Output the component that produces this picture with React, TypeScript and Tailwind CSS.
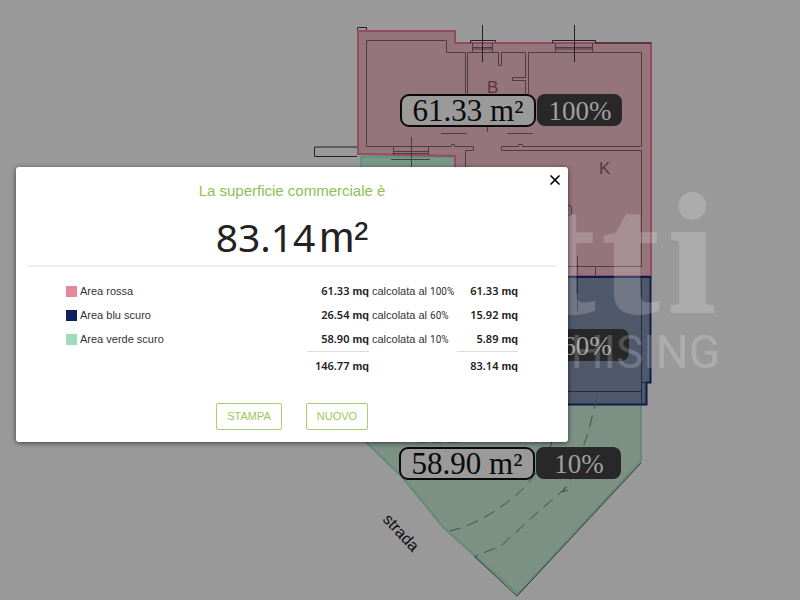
import { X } from 'lucide-react';

const areas = [
  { name: 'Area rossa', swatch: 'bg-[#e8879b]', size: '61.33', percent: '100%', result: '61.33' },
  { name: 'Area blu scuro', swatch: 'bg-[#0f1f60]', size: '26.54', percent: '60%', result: '15.92' },
  { name: 'Area verde scuro', swatch: 'bg-[#9edcba]', size: '58.90', percent: '10%', result: '5.89' },
];

function Amount({ value }: { value: string }) {
  return (
    <span className="font-bold text-[#222]">
      <span className="font-['Noto_Sans'] text-[11px] font-semibold">{value}</span> mq
    </span>
  );
}

function AreaTag({ x, y, size, percent }: { x: number; y: number; size?: string; percent: string }) {
  return (
    <g className="font-['Liberation_Serif',serif]">
      {size && (
        <>
          <rect x={x} y={y} width="134" height="31" rx="8" fill="#9a9a9a" stroke="#0a0a0a" strokeWidth="2" />
          <text x={x + 67} y={y + 26} textAnchor="middle" className="text-[31px]" fill="#0a0a0a">
            {size}
          </text>
        </>
      )}
      <rect x={x + 136} y={y - 1} width="85" height="32" rx="8" fill="#282828" />
      <text x={x + 179} y={y + 25} textAnchor="middle" className="text-[27px]" fill="#a0a0a0">
        {percent}
      </text>
    </g>
  );
}

function FloorPlan() {
  return (
    <svg className="absolute top-0 left-0 h-[600px] w-[800px]" viewBox="0 0 800 600" fill="none" aria-hidden="true">
      {/* stub wall and chimney */}
      <path d="M357 147H314.500V156.500H357M357.500 31V27.500H366.500V30" stroke="#222" />

      {/* green: upper strip and garden */}
      <path d="M361 157H455V180H361Z" fill="#7a9888" stroke="#5d977c" strokeWidth="2" />
      <path
        d="M350 426L367 443L403 478L443 527L475 556L518 594L641 461V404H400Z"
        fill="#7d9084"
        stroke="#648b78"
        strokeWidth="2"
      />
      <path d="M475 557L517 596L641 463" stroke="#353b37" />

      {/* red */}
      <path d="M358 31H455V43H651V276H455V156L358 154Z" fill="#94757b" stroke="#97495d" strokeWidth="2" />

      {/* dark blue */}
      <path d="M455 277H650.500V382.500H646.500V404.500H455Z" fill="#50586b" stroke="#0d1c49" strokeWidth="2" />
      <path d="M641.500 277V404M455 391.500H641M641 382.500H647M577.500 277V294M577.500 297V311" stroke="#222a42" />

      {/* walls */}
      <g stroke="#523a41">
        <path d="M465.500 94V52.500H446.500V40.500H366.500V146.500H451.500V144.500H454.500V146.500H473.500V150.500H465.500V170" />
        <path d="M467.500 94V52.500H498.500V65.500H501.500V52.500H525.500V77.500H512.500V80.500H525.500V94" />
        <path d="M528.500 94V52.500H641.500V146.500H522.500V144.500H518.500V146.500H501.500V150.500H641.500V266.500H560" />
        <path d="M441 133.500H467M507 133.500H533M487.500 126V132M577.500 256V276M595.500 266V276" />
        <path d="M472.500 43V52M492.500 43V52M555.500 43V52M592.500 43V52M393.500 147V155M428.500 147V155" />
        <path d="M472 47.500H492M472 49H492M555 47.500H592M555 49H592M393 151.500H428M393 153.500H428" />
        <path d="M411.500 137V167M391 159.500H430" />
        <path d="M567 205.500H570L571.500 207V214L570 215.500H567" />
      </g>
      <g stroke="#222">
        <path d="M482.500 25V62M574.500 25V62" />
        <path d="M470.500 43V40.500H495.500V42M552.500 43V40.500H595.500V43H651" />
      </g>

      {/* footpath across the garden */}
      <g stroke="#42514a">
        <path d="M597 397C592 415 590 430 583 447L568 486L538 512L501 546L478 555" strokeDasharray="12 7" />
        <path d="M553 439C545 465 525 492 499 508C482 520 466 527 450 531" strokeDasharray="12 7" />
        <path d="M562 492L568 490M563 492L565 487M478 555L474 557" />
      </g>
      <path d="M417 442H427M432 442H442M447 442H459" stroke="#485a51" />

      <g className="font-['Liberation_Sans',sans-serif] text-[17px]" fill="#5c323e">
        <text x="487" y="93">B</text>
        <text x="599" y="174">K</text>
      </g>
      <text
        x="382"
        y="520"
        transform="rotate(47 382 520)"
        className="font-['Liberation_Sans',sans-serif] text-[16px]"
        fill="#0a0a0a"
      >
        strada
      </text>

      <AreaTag x={401} y={95} size="61.33 m²" percent="100%" />
      <AreaTag x={408} y={330} percent="60%" />
      <AreaTag x={400} y={448} size="58.90 m²" percent="10%" />

      {/* agency watermark */}
      <g fill="#fff" stroke="#fff" opacity="0.19">
        <g className="font-['Liberation_Serif',serif] text-[171px] font-bold" strokeWidth="2">
          <text x="538" y="312">t</text>
          <text x="602" y="312">t</text>
          <text x="668" y="312">i</text>
        </g>
        <text x="720" y="368" textAnchor="end" className="font-['Roboto',sans-serif] text-[46px]" stroke="none">
          HISING
        </text>
      </g>
    </svg>
  );
}

export default function App() {
  return (
    <main className="relative min-h-screen overflow-hidden bg-[#999] pt-[167px] pr-4 pl-4 font-['Liberation_Sans',Arial,sans-serif]">
      <FloorPlan />

      <section
        role="dialog"
        aria-labelledby="dialog-title"
        className="relative w-full max-w-[552px] rounded-[3px] bg-white px-3 pt-4 pb-3 shadow-[0_1px_5px_rgba(0,0,0,0.6)]"
      >
        <button type="button" aria-label="Chiudi" className="absolute top-1 right-1 p-px text-black">
          <X size={16} strokeWidth={2.5} />
        </button>

        <h1 id="dialog-title" className="text-center text-[15px] leading-4 text-[#8cc152]">
          La superficie commerciale è
        </h1>
        <p className="mt-3 flex h-[54px] items-baseline justify-center gap-1 text-[42px] leading-[52px] text-[#222]">
          <span className="font-['Noto_Sans',sans-serif] text-[39px]">83.14</span>
          <span>m²</span>
        </p>
        <hr className="border-t-2 border-[#eee]" />

        <table className="mt-3 ml-[38px] w-[452px] table-fixed text-[11px] leading-4 text-[#333]">
          <colgroup>
            <col />
            <col className="w-[62px]" />
            <col className="w-[88px]" />
            <col className="w-[61px]" />
          </colgroup>
          <tbody>
            {areas.map((area) => (
              <tr key={area.name} className="h-6">
                <td>
                  <span className="flex items-center gap-[3px]">
                    <span className={`size-[11px] ${area.swatch}`} />
                    {area.name}
                  </span>
                </td>
                <td className="text-right">
                  <Amount value={area.size} />
                </td>
                <td className="pl-[3px] whitespace-nowrap">
                  calcolata al <span className="font-['Roboto'] text-[10px]">{area.percent}</span>
                </td>
                <td className="text-right">
                  <Amount value={area.result} />
                </td>
              </tr>
            ))}
          </tbody>
          <tfoot>
            <tr className="h-[30px]">
              <td />
              <td className="border-t border-[#ddd] text-right">
                <Amount value="146.77" />
              </td>
              <td />
              <td className="border-t border-[#ddd] text-right">
                <Amount value="83.14" />
              </td>
            </tr>
          </tfoot>
        </table>

        <div className="mt-[22px] flex justify-center gap-6 text-[11px] text-[#9bc95b]">
          <button type="button" className="h-[27px] w-[66px] rounded-[2px] border border-[#a8d070]">
            STAMPA
          </button>
          <button type="button" className="h-[27px] w-[62px] rounded-[2px] border border-[#a8d070]">
            NUOVO
          </button>
        </div>
      </section>
    </main>
  );
}
